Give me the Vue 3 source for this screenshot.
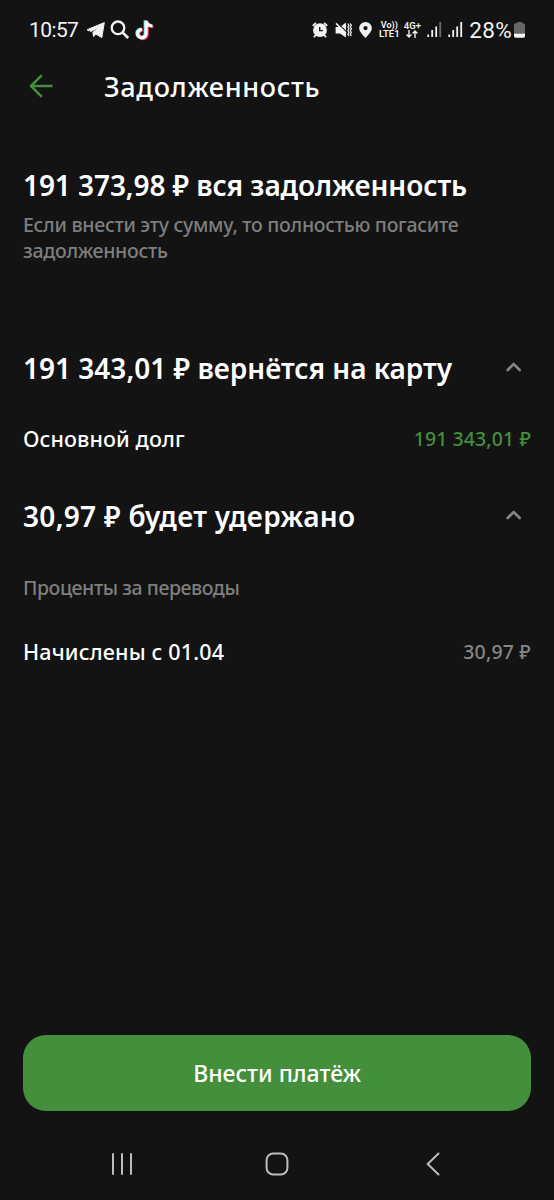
<template>
  <div class="screen">
    <div class="status-bar">
      <span class="time">10:57</span>
      <svg class="telegram" width="20" height="18" viewBox="0 0 20 18">
        <path d="M1 8.8 L18.3 1.6 L15.8 16.6 L9.8 13 L7.6 15.6 L6.9 11.3 L13.4 5.6 L5.2 10.4 Z" fill="#f2f2f2" stroke="#f2f2f2" stroke-width="1" stroke-linejoin="round" />
      </svg>
      <svg class="search" width="20" height="20" viewBox="0 0 20 20" fill="none" stroke="#f2f2f2" stroke-width="2.3">
        <circle cx="8" cy="7.8" r="6.3" />
        <path d="M12.5 12.4 L18.2 18" stroke-width="2.7" />
      </svg>
      <svg class="tiktok" width="20" height="22" viewBox="0 0 20 22" fill="none" stroke-width="3.2">
        <path d="M10.2 1.2 V14.2 A4.2 4.2 0 1 1 6.2 10 M10.2 1.6 C10.7 4.5 13.4 6.4 16.6 6.5" stroke="#40dfdc" />
        <path d="M12.2 2.6 V15.4 A4.2 4.2 0 1 1 7.8 11.2 M12.2 2.8 C12.7 5.7 15.4 7.6 18.4 7.7" stroke="#ef3657" />
        <path d="M11.1 1.8 V14.7 A4.2 4.2 0 1 1 7 10.5 M11.1 2 C11.6 5 14.3 6.9 17.4 7" stroke="#fff" />
      </svg>

      <div class="status-right">
        <svg class="alarm" width="16" height="16" viewBox="0 0 16 16">
          <circle cx="8" cy="8.2" r="6.9" fill="#f2f2f2" />
          <path d="M.8 3.9 L3.9 1 M15.2 3.9 L12.1 1 M3.7 13 L2 15.2 M12.3 13 L14 15.2" stroke="#f2f2f2" stroke-width="1.8" />
          <path d="M7.7 5 V8.7 H10.8" fill="none" stroke="#131313" stroke-width="1.3" />
        </svg>
        <svg class="mute" width="17" height="16" viewBox="0 0 17 16">
          <path d="M.6 5 H5 L11 .6 V15.4 L5 11.4 H.6 Z" fill="#f2f2f2" />
          <path d="M2.4 .8 L11.8 10.2" stroke="#131313" stroke-width="1.2" />
          <path d="M1 1.4 L11 11.4" stroke="#f2f2f2" stroke-width="1.5" />
          <path d="M12.8 1.5 L14 3.2 L12.8 5 L14 6.8 L12.8 8.6 L14 10.4 L12.8 12.2 L14 14 M15.2 1.5 L16.4 3.2 L15.2 5 L16.4 6.8 L15.2 8.6 L16.4 10.4 L15.2 12.2 L16.4 14" fill="none" stroke="#f2f2f2" stroke-width="1.2" />
        </svg>
        <svg class="pin" width="13" height="16" viewBox="0 0 13 16">
          <path fill-rule="evenodd" d="M6.5 0 A6.3 6.2 0 0 1 12.8 6.2 C12.8 10 8.6 13.4 6.5 16 C4.4 13.4 .2 10 .2 6.2 A6.3 6.2 0 0 1 6.5 0 Z M6.5 4 A2.1 2.1 0 1 0 6.5 8.2 A2.1 2.1 0 1 0 6.5 4 Z" fill="#f2f2f2" />
        </svg>
        <div class="net lte">
          <span class="volte">Vo))</span>
          <span>LTE1</span>
        </div>
        <div class="net lte4g">
          <span>4G+</span>
          <svg width="12" height="8" viewBox="0 0 12 8" fill="none" stroke="#f2f2f2" stroke-width="1.4">
            <path d="M3 0 V7 M.6 4.5 L3 7 L5.4 4.5 M9 8 V1 M6.6 3.5 L9 1 L11.4 3.5" />
          </svg>
        </div>
        <svg v-for="(last, i) in ['#6c6c6c', '#f2f2f2']" :key="i" class="signal" width="15" height="15" viewBox="0 0 15 15">
          <path d="M1.2 12.6 V15 M5.2 8 V15 M9.2 4.5 V15" stroke="#f2f2f2" stroke-width="1.8" />
          <path d="M13.2 0 V15" :stroke="last" stroke-width="1.8" />
        </svg>
        <span class="percent">28%</span>
        <svg class="battery" width="11" height="16" viewBox="0 0 11 16">
          <path d="M3 0 H8 V1.3 H9.5 Q11 1.3 11 3 V12 H0 V3 Q0 1.3 1.5 1.3 H3 Z" fill="#666" />
          <path d="M0 11.8 H11 V14 Q11 15.7 9.5 15.7 H1.5 Q0 15.7 0 14 Z" fill="#f5f5f5" />
        </svg>
      </div>
    </div>

    <header class="header">
      <svg width="24" height="24" viewBox="0 0 24 24" fill="none" stroke="#438f3b" stroke-width="2.5">
        <path d="M23.5 12 H2 M12.8 1.2 L2 12 L12.8 22.8" />
      </svg>
      <h1>Задолженность</h1>
    </header>

    <main class="content">
      <h2 class="total">191 373,98 ₽ вся задолженность</h2>
      <p class="hint">Если внести эту сумму, то полностью погасите<br />задолженность</p>

      <section v-for="group in groups" :key="group.title" class="group">
        <div class="group-head" @click="group.open = !group.open">
          <h2 :class="group.name">{{ group.title }}</h2>
          <svg :class="{ closed: !group.open }" width="16" height="11" viewBox="0 0 16 11" fill="none" stroke="#868686" stroke-width="2.6" stroke-linecap="round">
            <path d="M1.7 9 L7.7 3 L13.7 9" />
          </svg>
        </div>
        <template v-if="group.open">
          <p v-if="group.caption" class="caption">{{ group.caption }}</p>
          <div class="row" :class="group.name">
            <span class="label">{{ group.label }}</span>
            <span class="amount">{{ group.amount }}</span>
          </div>
        </template>
      </section>
    </main>

    <button class="pay">Внести платёж</button>

    <nav class="nav-bar">
      <svg width="22" height="24" viewBox="0 0 22 24" stroke="#bdbdbd" stroke-width="2" stroke-linecap="round">
        <path d="M2 2 V22 M11 2 V22 M20 2 V22" />
      </svg>
      <svg class="home" width="24" height="24" viewBox="0 0 24 24" fill="none" stroke="#bdbdbd" stroke-width="2">
        <rect x="1.6" y="1.6" width="20.8" height="20.8" rx="6.5" />
      </svg>
      <svg width="14" height="24" viewBox="0 0 14 24" fill="none" stroke="#bdbdbd" stroke-width="2" stroke-linecap="round">
        <path d="M12.5 1.5 L1.7 12 L12.5 22.5" />
      </svg>
    </nav>
  </div>
</template>

<script setup>
import { ref } from 'vue'

const groups = ref([
  {
    name: 'returned',
    title: '191 343,01 ₽ вернётся на карту',
    label: 'Основной долг',
    amount: '191 343,01 ₽',
    open: true
  },
  {
    name: 'withheld',
    title: '30,97 ₽ будет удержано',
    caption: 'Проценты за переводы',
    label: 'Начислены с 01.04',
    amount: '30,97 ₽',
    open: true
  }
])
</script>

<style>
body {
  margin: 0;
  background: #131313;
}
</style>

<style scoped>
.screen {
  display: flex;
  flex-direction: column;
  width: 554px;
  height: 1200px;
  background: #131313;
  color: #fff;
  font-family: 'Noto Sans', sans-serif;
  overflow: hidden;
}

h1,
h2,
p {
  margin: 0;
  white-space: nowrap;
}

svg {
  display: block;
  flex-shrink: 0;
}

.status-bar {
  display: flex;
  align-items: center;
  box-sizing: border-box;
  height: 59px;
  padding: 0 29px;
  color: #f2f2f2;
  font-family: Roboto, sans-serif;
}

.time {
  width: 57px;
  font-size: 21px;
  letter-spacing: -0.6px;
  white-space: nowrap;
}

.search {
  margin-left: 4px;
}

.tiktok {
  margin-left: 5px;
}

.status-right {
  display: flex;
  align-items: center;
  margin-left: auto;
}

.mute {
  margin-left: 7px;
}

.pin {
  margin-left: 7px;
}

.net {
  display: flex;
  flex-direction: column;
  align-items: center;
  font-size: 9.5px;
  font-weight: 600;
  line-height: 9px;
  white-space: nowrap;
}

.lte {
  width: 20px;
  margin-left: 7px;
}

.volte {
  font-size: 9px;
  line-height: 8px;
}

.lte4g {
  width: 18px;
  margin-left: 4px;
}

.signal {
  margin-left: 6px;
}

.percent {
  margin-left: 6px;
  font-size: 22.5px;
  letter-spacing: 0.3px;
}

.battery {
  margin-left: 2px;
}

.header {
  display: flex;
  align-items: center;
  height: 54px;
  padding-left: 29px;
}

.header h1 {
  margin-left: 51px;
  font-size: 27px;
  font-weight: 500;
  letter-spacing: 0.66px;
}

.content {
  flex: 1;
  padding: 54px 23px 0;
}

h2 {
  font-size: 28px;
  font-weight: 600;
  line-height: 36px;
}

.total {
  letter-spacing: -0.08px;
}

h2.withheld {
  letter-spacing: 0.3px;
}

.hint {
  margin-top: 9px;
  color: #7e7e7e;
  font-size: 19.5px;
  font-weight: 500;
  line-height: 25.5px;
  letter-spacing: -0.28px;
}

.group {
  margin-top: 44px;
}

.hint + .group {
  margin-top: 87px;
}

.group-head {
  display: flex;
  align-items: center;
  justify-content: space-between;
  padding-right: 9px;
  cursor: pointer;
}

.group-head svg {
  margin-bottom: 3px;
}

.group-head .closed {
  transform: rotate(180deg);
}

.caption {
  margin-top: 39px;
  color: #7e7e7e;
  font-size: 19.5px;
  font-weight: 500;
  line-height: 30px;
  letter-spacing: -0.44px;
}

.row {
  display: flex;
  align-items: center;
  justify-content: space-between;
  margin-top: 38px;
  line-height: 30px;
  letter-spacing: 0.1px;
}

.caption + .row {
  margin-top: 34px;
  letter-spacing: 0.18px;
}

.label {
  font-size: 21.5px;
  font-weight: 500;
}

.amount {
  color: #868686;
  font-size: 19.5px;
  font-weight: 500;
}

.returned .amount {
  color: #438f3b;
}

.pay {
  height: 76px;
  margin: 0 23px 17px;
  border: none;
  border-radius: 23px;
  background: #438f3b;
  color: #fff;
  font-family: inherit;
  font-size: 23px;
  font-weight: 500;
}

.nav-bar {
  display: flex;
  align-items: center;
  justify-content: space-between;
  box-sizing: border-box;
  height: 72px;
  padding: 0 114px 0 111px;
}

.home {
  margin-right: 5px;
}
</style>
